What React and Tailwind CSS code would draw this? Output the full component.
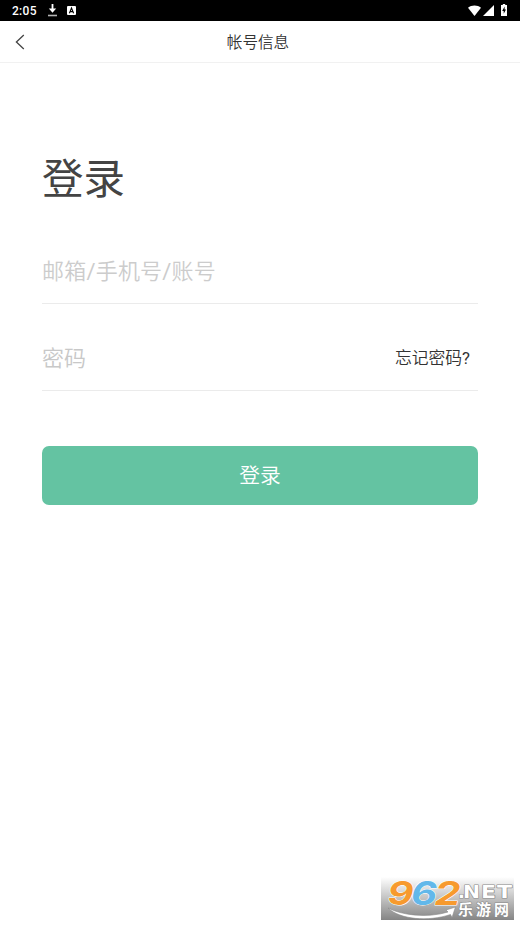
// ============================================================
// Login screen: status bar, nav header, account form
// ============================================================

function StatusBar() {
  return (
    <div className="h-[21px] bg-black text-white flex items-center justify-between pl-3 pr-[13px]">
      <div className="flex items-center">
        <span className="w-[36px] pt-[1px] font-[Roboto] font-medium text-[12px] leading-[20px] tracking-[0.3px]">2:05</span>
        <svg width="9" height="13" viewBox="0 0 9 13">
          <path d="M4.5 0v7" stroke="#fff" strokeWidth="1.8" />
          <path d="M.8 4.6h7.4L4.5 8.8z" fill="#fff" />
          <path d="M0 11.5h9" stroke="#b5b5b5" strokeWidth="1.6" />
        </svg>
        <svg className="ml-[10px]" width="9" height="9" viewBox="0 0 9 9">
          <rect width="9" height="9" rx="1" fill="#fff" />
          <path d="M2.4 7.2 4.5 2l2.1 5.2M3.2 5.6h2.6" fill="none" stroke="#000" strokeWidth="1.1" />
        </svg>
      </div>
      <div className="flex items-center pb-[1px]">
        <svg width="13" height="11" viewBox="0 0 14 11" preserveAspectRatio="none">
          <path d="M0 2.8C3.8-.4 10.2-.4 14 2.8L7 11z" fill="#fff" />
        </svg>
        <svg className="ml-[2px]" width="11" height="11" viewBox="0 0 11 11">
          <path d="M11 0v11H0z" fill="#fff" />
        </svg>
        <svg className="ml-[7px]" width="6" height="12" viewBox="0 0 6 12">
          <path d="M1.8 0h2.4v1H6v11H0V1h1.8z" fill="#fff" />
          <path d="M3.6 2.6 1.2 7h1.5v2.8L5 5.6H3.6z" fill="#000" />
        </svg>
      </div>
    </div>
  );
}

function NavHeader() {
  return (
    <header className="h-[42px] border-b border-[#f1f1f1] grid grid-cols-[1fr_auto_1fr] items-center">
      <button className="pl-[15px]" aria-label="返回">
        <svg width="10" height="16" viewBox="0 0 10 16" fill="none" stroke="#444" strokeWidth="1.3">
          <path d="M8.8 1 1.4 8l7.4 7" />
        </svg>
      </button>
      <h1 className="pb-[2px] pr-[4px] text-[15.6px] leading-[24px] text-[#333] font-[350]">帐号信息</h1>
      <span />
    </header>
  );
}

function LoginForm() {
  return (
    <main className="px-[42px] pt-[83px]">
      <h2 className="text-[41.5px] leading-[60px] text-[#444] font-normal">登录</h2>

      <div className="mt-[33px] h-[65px] pb-[2px] border-b border-[#ebebeb] flex items-center text-[22px] tracking-[0.2px] text-[#ccc]">
        <span>
          邮箱<span className="font-[Roboto] font-normal">/</span>手机号<span className="font-[Roboto] font-normal">/</span>账号
        </span>
      </div>

      <div className="mt-[22px] h-[65px] border-b border-[#ebebeb] flex items-center justify-between">
        <span className="pb-[3px] text-[22px] text-[#c8c8c8]">密码</span>
        <a className="pr-[8px] text-[16.8px] text-[#333]">
          忘记密码<span className="font-[Roboto] font-normal">?</span>
        </a>
      </div>

      <button className="mt-[55px] w-full h-[59px] rounded-[7px] bg-[#64c3a2] text-white text-[20.8px] pb-[2px]">
        登录
      </button>
    </main>
  );
}

function SiteBadge() {
  return (
    <svg className="absolute left-[381px] top-[877px]" width="133" height="43" viewBox="0 0 133 43">
      <defs>
        <linearGradient id="badgeBg" x1="0" y1="0" x2="0" y2="1">
          <stop offset="0" stopColor="#fff" />
          <stop offset="1" stopColor="#858585" />
        </linearGradient>
      </defs>
      <rect width="133" height="43" fill="url(#badgeBg)" />
      <g
        fontFamily="Inter, sans-serif"
        fontWeight="700"
        fontStyle="italic"
        fontSize="33"
        stroke="#fff"
        strokeWidth="1"
        strokeLinejoin="round"
        paintOrder="stroke"
      >
        <text x="6.5" y="27.5" textLength="26" lengthAdjust="spacingAndGlyphs" fill="#f79a2e">9</text>
        <text x="30" y="27.5" textLength="26" lengthAdjust="spacingAndGlyphs" fill="#62b8ea">6</text>
        <text x="53.5" y="27.5" textLength="26" lengthAdjust="spacingAndGlyphs" fill="#f79a2e">2</text>
      </g>
      <path
        d="M7 31C20 38 46 41.5 67 35L65 33 74.5 30 71 40.5 69.5 37.5C47 45 19 42.5 7 31z"
        fill="#fff"
        stroke="#888"
        strokeWidth=".6"
      />
      <g fill="#fff" stroke="#8a8a8a" strokeWidth="1.2" strokeLinejoin="round" paintOrder="stroke" fontWeight="700">
        <g fontFamily="'DejaVu Sans', sans-serif" fontSize="18">
          <text x="77" y="20.5">.</text>
          <text x="82" y="20.5" textLength="17" lengthAdjust="spacingAndGlyphs">N</text>
          <text x="100" y="20.5" textLength="15" lengthAdjust="spacingAndGlyphs">E</text>
          <text x="116" y="20.5" textLength="15" lengthAdjust="spacingAndGlyphs">T</text>
        </g>
        <text x="77" y="38" fontFamily="'Noto Sans CJK SC', sans-serif" fontSize="15" textLength="51">乐游网</text>
      </g>
    </svg>
  );
}

export default function App() {
  return (
    <div className="relative w-[520px] h-[926px] bg-white overflow-hidden font-[350] font-['Noto_Sans_CJK_SC',sans-serif]">
      <StatusBar />
      <NavHeader />
      <LoginForm />
      <SiteBadge />
    </div>
  );
}
